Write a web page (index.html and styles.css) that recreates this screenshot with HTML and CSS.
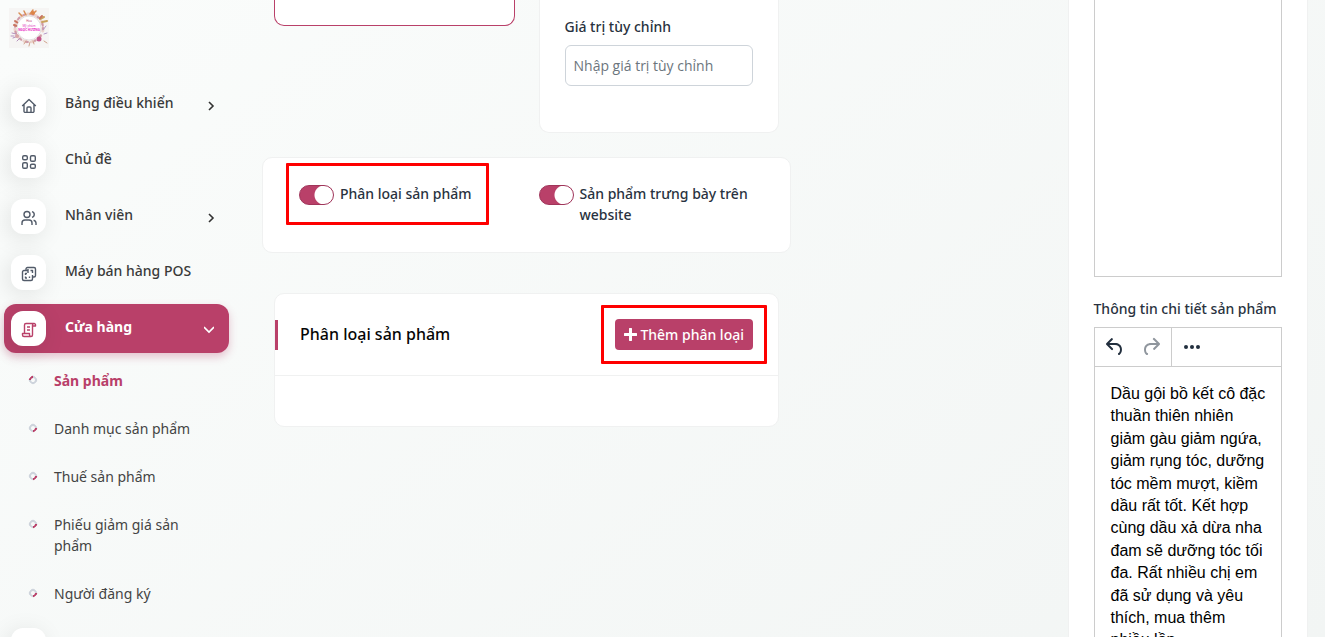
FILE: index.html
```html
<!DOCTYPE html>
<html lang="vi">
<head>
  <meta charset="UTF-8" />
  <title>Sản phẩm</title>
  <meta name="viewport" content="width=device-width, initial-scale=1.0">
  <link rel="stylesheet" href="styles.css">
</head>
<body>
  <nav class="sidebar">
    <a href="#" class="logo">
      <svg width="40" height="40" viewBox="0 0 40 40">
        <rect width="40" height="40" fill="#f6f5f4"/>
        <g fill="none" stroke-linecap="round">
          <circle cx="20" cy="20" r="14" stroke="#ecd3cd" stroke-width="3" stroke-dasharray="3 5"/>
          <circle cx="20" cy="20" r="14" stroke="#cf9aa8" stroke-width="2" stroke-dasharray="1 7 2 5"/>
          <path d="M21 6l3-4M25 5l2-2M17 7l-2-4M13 8l-3-3" stroke="#d98d55" stroke-width="1.500"/>
          <path d="M31 11l4-2M33 14l5-1" stroke="#c9a25c" stroke-width="2"/>
          <path d="M6 13l3 2M5 17l3 1M33 8l-2 2" stroke="#c8745f" stroke-width="2"/>
          <path d="M3 25l4 1M4 30l5-2M8 33l3-3M2 28l3 0" stroke="#b592bd" stroke-width="1"/>
          <path d="M15 36l2-3M20 38l1-4M25 36l-1-3M35 33l3 2" stroke="#d0a48d" stroke-width="1"/>
          <path d="M34 22l3-4M35 26l3-1" stroke="#b49ac8" stroke-width="1"/>
        </g>
        <circle cx="30" cy="31" r="2.500" fill="#c4568b"/>
        <circle cx="24" cy="5" r="2" fill="#dd8446"/>
        <circle cx="8" cy="28" r="2" fill="#d9a6a8"/>
        <circle cx="20" cy="20" r="12" fill="#fff" stroke="#d7d2d4" stroke-width=".700"/>
        <text x="20" y="14" font-size="3" fill="#c2417c">Hoa</text>
        <text x="20" y="19" font-size="3" fill="#e23fc0">Mỹ phẩm</text>
        <text x="20" y="23" font-size="3" font-weight="700" fill="#e817c0">NGỌC HƯƠNG</text>
      </svg>
    </a>

    <ul class="menu">
      <li>
        <a href="#" class="menu-link">
          <span class="menu-icon">
            <svg viewBox="0 0 16 16"><path d="M1.200 8L8 1.600 14.800 8M3 6.600v6.600a1.200 1.200 0 0 0 1.200 1.200h7.600a1.200 1.200 0 0 0 1.200-1.200V6.600M6 14.200V10a1 1 0 0 1 1-1h2a1 1 0 0 1 1 1v4.200"/></svg>
          </span>
          <span class="menu-text">Bảng điều khiển</span>
          <svg class="arrow" viewBox="0 0 10 10"><path d="M3 1l4 4-4 4"/></svg>
        </a>
      </li>
      <li>
        <a href="#" class="menu-link">
          <span class="menu-icon">
            <svg viewBox="0 0 16 16"><rect x="1.700" y="1.700" width="4.600" height="4" rx="1.300"/><rect x="9.500" y="1.700" width="4.800" height="5.600" rx="1.300"/><rect x="1.700" y="8.700" width="4.600" height="5.600" rx="1.300"/><rect x="9.500" y="10.300" width="4.800" height="4" rx="1.300"/></svg>
          </span>
          <span class="menu-text">Chủ đề</span>
        </a>
      </li>
      <li>
        <a href="#" class="menu-link">
          <span class="menu-icon">
            <svg viewBox="0 0 16 16"><circle cx="6" cy="4.500" r="3"/><path d="M1 15v-2a3 3 0 0 1 3-3h4a3 3 0 0 1 3 3v2M11 1.600a3 3 0 0 1 0 5.800M12.600 10.200A3 3 0 0 1 15 13v2"/></svg>
          </span>
          <span class="menu-text">Nhân viên</span>
          <svg class="arrow" viewBox="0 0 10 10"><path d="M3 1l4 4-4 4"/></svg>
        </a>
      </li>
      <li>
        <a href="#" class="menu-link">
          <span class="menu-icon">
            <svg viewBox="0 0 16 16"><path d="M5 4.500V3a1.500 1.500 0 0 1 1.500-1.500H13A1.500 1.500 0 0 1 14.500 3v6.500A1.500 1.500 0 0 1 13 11h-1.500M7 4.500H3A1.500 1.500 0 0 0 1.500 6v7A1.500 1.500 0 0 0 3 14.500h7a1.500 1.500 0 0 0 1.500-1.500V9M4.500 9V7.500H6M4.500 10.500V12H6M8.500 10.500V12M9.500 4.500h2v2.500M7 3v4"/></svg>
          </span>
          <span class="menu-text">Máy bán hàng POS</span>
        </a>
      </li>
      <li>
        <a href="#" class="menu-link active">
          <span class="menu-icon">
            <svg viewBox="0 0 16 16"><path d="M3.500 11V3A1.500 1.500 0 0 1 5 1.500h8.200a1.300 1.300 0 0 1 1.300 1.300V4h-3M13 1.500a1.500 1.500 0 0 0-1.500 1.500v10a1.500 1.500 0 0 1-3 0v-1.500h-7V13A1.500 1.500 0 0 0 3 14.500h7M6 5h3M6 8h3"/></svg>
          </span>
          <span class="menu-text">Cửa hàng</span>
          <svg class="arrow" viewBox="0 0 10 10"><path d="M0 3l5 5 5-5"/></svg>
        </a>
        <ul class="submenu">
          <li><a href="#" class="active">Sản phẩm</a></li>
          <li><a href="#">Danh mục sản phẩm</a></li>
          <li><a href="#">Thuế sản phẩm</a></li>
          <li><a href="#">Phiếu giảm giá sản phẩm</a></li>
          <li><a href="#">Người đăng ký</a></li>
        </ul>
      </li>
      <li>
        <a href="#" class="menu-link" aria-label="Menu"><span class="menu-icon"></span></a>
      </li>
    </ul>
  </nav>

  <main class="content">
    <div class="form-area">
      <div class="top-row">
        <div class="upload-box"></div>
        <div class="card custom-card">
          <label for="customValue">Giá trị tùy chỉnh</label>
          <input type="text" id="customValue" class="text-input" placeholder="Nhập giá trị tùy chỉnh">
        </div>
      </div>

      <div class="card switch-card">
        <div class="switch-col">
          <div class="switch-row marked">
            <input type="checkbox" class="switch" id="variantSwitch" checked>
            <label for="variantSwitch">Phân loại sản phẩm</label>
          </div>
        </div>
        <div class="switch-col">
          <div class="switch-row">
            <input type="checkbox" class="switch" id="displaySwitch" checked>
            <label for="displaySwitch">Sản phẩm trưng bày trên website</label>
          </div>
        </div>
      </div>

      <section class="card variant-card">
        <div class="variant-head">
          <h5>Phân loại sản phẩm</h5>
          <div class="marked">
            <button type="button" class="btn">
              <svg width="13" height="13" viewBox="0 0 13 13"><path d="M6.500 1v11M1 6.500h11"/></svg>
              Thêm phân loại
            </button>
          </div>
        </div>
        <div class="variant-body"></div>
      </section>
    </div>

    <div class="card detail-card">
      <div class="editor-blank"></div>
      <h6>Thông tin chi tiết sản phẩm</h6>
      <div class="editor">
        <div class="toolbar">
          <div class="tool-group">
            <button type="button" aria-label="Undo"><svg width="24" height="24" viewBox="0 0 24 24"><path d="M6.400 8H12c3.700 0 6.200 2 6.800 5.100.600 2.700-.400 5.600-2.300 6.800a1 1 0 0 1-1-1.800c1.100-.600 1.800-2.700 1.400-4.600-.500-2.100-2.100-3.500-4.900-3.500H6.400l3.300 3.300a1 1 0 1 1-1.400 1.400l-5-5a1 1 0 0 1 0-1.400l5-5a1 1 0 0 1 1.400 1.400L6.400 8z"/></svg></button>
            <button type="button" aria-label="Redo" disabled><svg width="24" height="24" viewBox="0 0 24 24"><path d="M17.600 10H12c-2.800 0-4.400 1.400-4.900 3.500-.400 2 .300 4 1.400 4.600a1 1 0 1 1-1 1.800c-2-1.200-2.900-4.100-2.300-6.800.600-3 3-5.100 6.800-5.100h5.600l-3.300-3.300a1 1 0 1 1 1.400-1.400l5 5a1 1 0 0 1 0 1.400l-5 5a1 1 0 0 1-1.400-1.400l3.300-3.300z"/></svg></button>
          </div>
          <div class="tool-group">
            <button type="button" aria-label="More"><svg width="24" height="24" viewBox="0 0 24 24"><circle cx="6" cy="12" r="2"/><circle cx="12" cy="12" r="2"/><circle cx="18" cy="12" r="2"/></svg></button>
          </div>
        </div>
        <div class="editor-text">Dầu gội bồ kết cô đặc thuần thiên nhiên giảm gàu giảm ngứa, giảm rụng tóc, dưỡng tóc mềm mượt, kiềm dầu rất tốt. Kết hợp cùng dầu xả dừa nha đam sẽ dưỡng tóc tối đa. Rất nhiều chị em đã sử dụng và yêu thích, mua thêm nhiều lần</div>
      </div>
    </div>
  </main>
</body>
</html>
```
FILE: styles.css
```css
* {
  box-sizing: border-box;
}
body {
  margin: 0;
  height: 100vh;
  overflow: hidden;
  display: flex;
  font-family: "Noto Sans", "Open Sans", sans-serif;
  font-size: 14px;
  line-height: 21px;
  color: #293240;
  background: linear-gradient(141deg, #fafcfb 3%, #f2f5f4 100%);
}
ul {
  list-style: none;
  margin: 0;
  padding: 0;
}
a {
  color: inherit;
  text-decoration: none;
}
h5, h6 {
  margin: 0;
  font-weight: 500;
}

/* sidebar */
.sidebar {
  flex: 0 0 250px;
  padding: 8px 21px 0 4px;
  color: #3a3a3a;
}
.logo {
  display: block;
  height: 72px;
  padding-left: 5px;
}
.logo svg {
  display: block;
}
.logo text {
  text-anchor: middle;
}
.menu > li {
  margin-bottom: 7px;
}
.menu-link {
  display: flex;
  align-items: center;
  height: 49px;
  padding: 7px 13px 7px 7px;
  border-radius: 12px;
  font-weight: 500;
}
.menu-icon {
  display: flex;
  align-items: center;
  justify-content: center;
  width: 35px;
  height: 35px;
  margin-right: 19px;
  padding-top: 3px;
  border-radius: 12px;
  background: #fff;
  box-shadow: -3px 4px 23px rgba(0, 0, 0, 0.1);
}
.menu-icon svg {
  width: 16px;
  height: 16px;
  fill: none;
  stroke: #525b69;
  stroke-width: 1.4;
  stroke-linejoin: round;
}
.menu-text {
  flex: 1;
  padding-bottom: 5px;
}
.arrow {
  width: 10px;
  height: 10px;
  margin-top: 3px;
  fill: none;
  stroke: #333;
  stroke-width: 1.6;
}
.menu-link.active {
  padding-right: 15px;
  background: #b94069;
  color: #fff;
  font-weight: 700;
  box-shadow: 0 4px 8px rgba(185, 64, 105, 0.3);
}
.menu-link.active svg {
  stroke: #b94069;
}
.menu-link.active .arrow {
  margin-top: 0;
  stroke: #fff;
}
.menu > li:has(.submenu) {
  margin-bottom: 0;
}
.submenu {
  display: flex;
  flex-direction: column;
  gap: 27px;
  padding: 17px 20px 17px 25px;
  color: #444;
}
.submenu a {
  display: flex;
}
.submenu a::before {
  content: "";
  flex: none;
  width: 8px;
  height: 8px;
  margin: 6px 17px 0 0;
  border: 2px solid #ced4dc;
  border-right-color: #b94069;
  border-radius: 50%;
  transform: rotate(45deg);
  box-sizing: border-box;
}
.submenu a.active {
  color: #b94069;
  font-weight: 700;
}
.submenu a.active::before {
  transform: rotate(225deg);
}

/* content */
.content {
  flex: 1;
  display: grid;
  grid-template-columns: 50% 25% 25%;
  padding: 0 5px 0 12px;
}
.card {
  background: #fff;
  border: 1px solid #f0f1f1;
  border-radius: 10px;
}
.top-row {
  display: grid;
  grid-template-columns: 1fr 1fr;
  align-items: start;
  gap: 24px;
  padding: 0 12px;
}
.upload-box {
  height: 26px;
  background: #fff;
  border: 1px solid #b94069;
  border-top: 0;
  border-radius: 0 0 10px 10px;
}
.custom-card {
  padding: 16px 25px 46px;
  border-top: 0;
  border-radius: 0 0 10px 10px;
  font-weight: 500;
}
.custom-card label {
  display: block;
  margin-bottom: 8px;
}
.text-input {
  display: block;
  width: 100%;
  height: 41px;
  padding: 0 8px;
  border: 1px solid #ced4da;
  border-radius: 6px;
  font-family: "Open Sans", "Noto Sans", sans-serif;
  font-size: 14px;
  background: #fff;
}
.text-input::placeholder {
  color: #6c757d;
  opacity: 1;
}
.switch-card {
  display: grid;
  grid-template-columns: 1fr 1fr;
  min-height: 96px;
  margin-top: 24px;
  padding: 25px 24px;
  font-weight: 500;
}
.switch-col {
  padding: 0 12px;
}
.switch-row {
  display: flex;
  align-items: flex-start;
  gap: 6px;
}
.switch {
  appearance: none;
  flex: none;
  width: 35px;
  height: 20px;
  margin: 2px 0 0;
  border: 1px solid #a0355a;
  border-radius: 10px;
  background: radial-gradient(circle at 24px 9px, #fff 9px, #b94069 10px);
}

/* red frame round the things to click */
.marked {
  position: relative;
}
.marked::after {
  content: "";
  position: absolute;
  inset: -14px;
  border: 3px solid #fe0000;
  border-radius: 1px;
  pointer-events: none;
}
.switch-row.marked {
  width: max-content;
}
.switch-row.marked::after {
  inset: -20px -18px -20px -13px;
}

.variant-card {
  margin: 40px 12px 0;
}
.variant-head {
  display: flex;
  align-items: center;
  justify-content: space-between;
  padding: 25px 25px 25px 0;
  border-bottom: 1px solid #f0f1f1;
}
.variant-head h5 {
  padding: 3px 0 5px 22px;
  border-left: 3px solid #b94069;
  font-size: 16px;
  line-height: 22px;
  color: #060606;
}
.btn {
  display: flex;
  align-items: center;
  gap: 3px;
  padding: 5px 9px;
  border: 0;
  border-radius: 4px;
  background: #b94069;
  color: #fff;
  font: inherit;
  font-weight: 500;
  cursor: pointer;
}
.btn svg {
  stroke: #fff;
  stroke-width: 3;
  stroke-linecap: round;
}
.variant-body {
  height: 50px;
}

.detail-card {
  grid-column: 3;
  height: 100vh;
  margin: 0 12px;
  padding: 0 25px;
  border-width: 0 1px;
  border-radius: 0;
  overflow: hidden;
}
.editor-blank {
  height: 277px;
  border: 1px solid #ccc;
  border-top: 0;
}
.detail-card h6 {
  margin: 21px 0 8px;
  font-size: 14px;
  line-height: 21px;
  white-space: nowrap;
}
.editor {
  border: 1px solid #ccc;
}
.toolbar {
  display: flex;
  height: 39px;
  border-bottom: 1px solid #ccc;
}
.tool-group {
  display: flex;
  align-items: center;
  gap: 2px;
  padding: 0 3px;
}
.tool-group + .tool-group {
  border-left: 1px solid #ccc;
}
.toolbar button {
  display: flex;
  justify-content: center;
  width: 34px;
  padding: 0;
  border: 0;
  background: none;
}
.toolbar svg {
  fill: #222f3e;
}
.toolbar button:disabled {
  opacity: 0.5;
}
.editor-text {
  padding: 16px 14px 16px 16px;
  font-family: "Liberation Sans", Arial, sans-serif;
  font-size: 16px;
  line-height: 1.4;
  color: #000;
}
```
